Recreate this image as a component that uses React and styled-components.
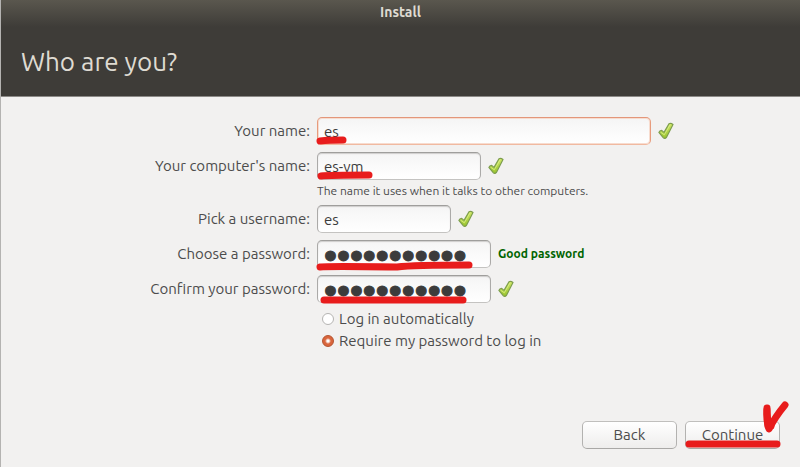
import React from "react";
import styled, { createGlobalStyle, css } from "styled-components";

export default function App() {
  return (
    <>
      <GlobalStyle />
      <Window>
        <Header>
          <TitleBar>Install</TitleBar>
          <Heading>Who are you?</Heading>
        </Header>
        <Form onSubmit={(e) => e.preventDefault()}>
          <Fields>
            <Label htmlFor="name">Your name:</Label>
            <Row>
              <Field $grow>
                <Input id="name" defaultValue="es" $active />
                <Stroke width="40" height="16" $left={-2} $top={16}>
                  <path d="M5 8 Q14 7 28 7" />
                </Stroke>
              </Field>
              <Check />
            </Row>

            <Label htmlFor="computer">Your computer's name:</Label>
            <Row>
              <Field $width={164}>
                <Input id="computer" defaultValue="es-vm" />
                <Stroke width="64" height="16" $left={-2} $top={16}>
                  <path d="M6 8 Q14 7 54 7" />
                </Stroke>
              </Field>
              <Check />
            </Row>
            <Hint>The name it uses when it talks to other computers.</Hint>

            <Label htmlFor="username">Pick a username:</Label>
            <Row>
              <Field $width={134}>
                <Input id="username" defaultValue="es" />
              </Field>
              <Check />
            </Row>

            <Label htmlFor="password">Choose a password:</Label>
            <Row>
              <Field $width={174}>
                <Input id="password" type="password" defaultValue="ubuntu-2018" />
                <Stroke width="164" height="16" $left={-2} $top={18}>
                  <path d="M5 9 Q12 8 82 9 Q98 7 154 7" />
                </Stroke>
              </Field>
              <Strength>Good password</Strength>
            </Row>

            <Label htmlFor="confirm">Confirm your password:</Label>
            <Row>
              <Field $width={174}>
                <Input id="confirm" type="password" defaultValue="ubuntu-2018" />
                <Stroke width="164" height="16" $left={-2} $top={17}>
                  <path d="M9 8 L148 8" />
                </Stroke>
              </Field>
              <Check />
            </Row>

            <Options>
              <Option>
                <Radio type="radio" name="login" />
                Log in automatically
              </Option>
              <Option>
                <Radio type="radio" name="login" defaultChecked />
                Require my password to log in
              </Option>
            </Options>
          </Fields>

          <Footer>
            <Button type="button">Back</Button>
            <ButtonWrap>
              <Button type="submit">Continue</Button>
              <Stroke width="112" height="64" $left={-2} $top={-25}>
                <path d="M6 48 L94 48" />
                <path d="M84 12 Q83 24 86 33 Q92 21 102 9" />
                <path d="M84 14 L85 30 L88 30" />
              </Stroke>
            </ButtonWrap>
          </Footer>
        </Form>
      </Window>
    </>
  );
}

function Check() {
  return (
    <svg width="16" height="18" viewBox="0 0 16 18" aria-hidden="true">
      <defs>
        <linearGradient id="leaf" x1="0" y1="0" x2="0" y2="1">
          <stop offset="0" stopColor="#cfe766" />
          <stop offset="1" stopColor="#98c42c" />
        </linearGradient>
      </defs>
      <path
        d="M0.9 10.4 Q1.6 8.6 3.7 8.4 L6 10.4 L11 1.8 Q12.6 0.6 15 2.4 L8.4 15.4 Q6.8 17.4 5.2 15.6 Z"
        fill="url(#leaf)"
        stroke="#7d9d4e"
        strokeWidth="1.2"
        strokeLinejoin="round"
      />
      <path
        d="M2.6 10.2 L6.3 12.8 L12.2 2.6"
        fill="none"
        stroke="#e2f294"
        strokeWidth="0.7"
      />
    </svg>
  );
}

const GlobalStyle = createGlobalStyle`
  * {
    box-sizing: border-box;
  }

  body {
    margin: 0;
    background: #f2f1f0;
    color: #4c4c4c;
    font-family: Ubuntu, "Noto Sans", sans-serif;
    font-size: 15px;
    line-height: 20px;
  }
`;

const Window = styled.div`
  display: flex;
  flex-direction: column;
  min-height: 100vh;
  border-left: 1px solid #b4b3b1;
`;

const Header = styled.header`
  background: linear-gradient(#5a574e, #3e3c38 27px);
  border-bottom: 1px solid #8c8a87;
  color: #dfdbd2;
`;

const TitleBar = styled.div`
  height: 26px;
  line-height: 25px;
  font-size: 14px;
  font-weight: bold;
  text-align: center;
`;

const Heading = styled.h1`
  margin: 0;
  padding: 18px 20px 16px;
  font-size: 26px;
  font-weight: normal;
  line-height: 36px;
`;

const Form = styled.form`
  display: flex;
  flex: 1;
  flex-direction: column;
  justify-content: space-between;
`;

const Fields = styled.div`
  display: grid;
  grid-template-columns: 309px 1fr;
  column-gap: 7px;
  row-gap: 7px;
  align-items: center;
  padding: 20px 126px 0 0;
`;

const Label = styled.label`
  text-align: right;
`;

const Row = styled.div`
  display: flex;
  align-items: center;
  gap: 7px;
`;

const Field = styled.div`
  position: relative;
  width: ${({ $width }) => ($width ? `${$width}px` : "auto")};
  flex: ${({ $grow }) => ($grow ? "1" : "none")};
`;

const Input = styled.input`
  display: block;
  width: 100%;
  height: 28px;
  padding: 0 6px;
  border: 1px solid;
  border-color: #9f9e9c #abaaa8 #c4c3c1;
  border-radius: 5px;
  outline: none;
  background: linear-gradient(#f5f5f5, #ffffff);
  box-shadow: inset 0 1px 1px #cfcecd;
  color: #3c3c3c;
  font: inherit;

  ${({ $active }) =>
    $active &&
    css`
      border-color: #e3967a #e79b7c #f1b9a0;
      box-shadow: inset 0 0 0 1px #f7dccf;
    `}

  &[type="password"] {
    padding-top: 3px;
    font-family: "Liberation Sans", sans-serif;
    font-size: 37px;
    line-height: 23px;
    -webkit-text-stroke: 1px #3c3c3c;
  }
`;

const Stroke = styled.svg`
  position: absolute;
  left: ${({ $left }) => $left}px;
  top: ${({ $top }) => $top}px;
  fill: none;
  stroke: #e81c1c;
  stroke-width: 7px;
  stroke-linecap: round;
  stroke-linejoin: round;
  pointer-events: none;
`;

const Hint = styled.div`
  grid-column: 2;
  margin-top: -4px;
  font-size: 12px;
  line-height: 15px;
`;

const Strength = styled.strong`
  color: #006400;
  font-size: 12px;
`;

const Options = styled.div`
  grid-column: 2;
  margin-top: -2px;
  padding: 0 5px;
`;

const Option = styled.label`
  display: flex;
  align-items: center;
  gap: 5px;
  height: 22px;
`;

const Radio = styled.input`
  appearance: none;
  width: 12px;
  height: 12px;
  margin: 0;
  border: 1px solid #b5b4b2;
  border-radius: 50%;
  background: #ffffff;

  &:checked {
    border-color: #b5522e;
    background: radial-gradient(#ffffff 1px, #d9653c 3px);
  }
`;

const Footer = styled.footer`
  display: flex;
  justify-content: flex-end;
  gap: 8px;
  padding: 18px 20px;
`;

const ButtonWrap = styled.div`
  position: relative;
`;

const Button = styled.button`
  width: 95px;
  height: 28px;
  padding: 0;
  border: 1px solid;
  border-color: #c0bfbd #b3b2b0 #a9a8a6;
  border-radius: 5px;
  background: linear-gradient(#ffffff, #eeedec);
  color: #4c4c4c;
  font: inherit;
`;
